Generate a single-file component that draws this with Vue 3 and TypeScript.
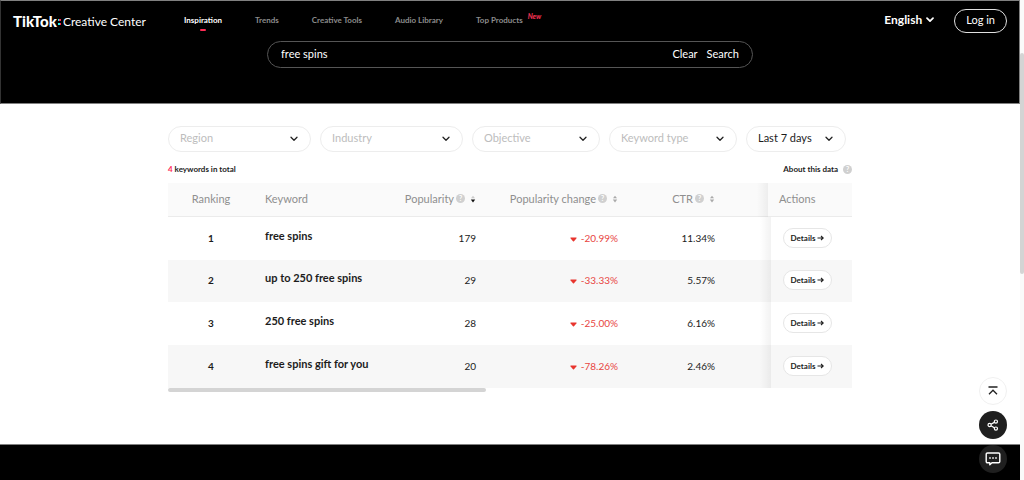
<script setup lang="ts">
import { ref } from 'vue'

interface NavItem { label: string; active?: boolean; badge?: string }
interface Filter { id: string; label: string; size: string; filled?: boolean }
interface Row { rank: number; keyword: string; popularity: number; change: string; ctr: string }

const nav: NavItem[] = [
  { label: 'Inspiration', active: true },
  { label: 'Trends' },
  { label: 'Creative Tools' },
  { label: 'Audio Library' },
  { label: 'Top Products', badge: 'New' },
]

const filters: Filter[] = [
  { id: 'region', label: 'Region', size: 'wide' },
  { id: 'industry', label: 'Industry', size: 'wide' },
  { id: 'objective', label: 'Objective', size: 'medium' },
  { id: 'keyword-type', label: 'Keyword type', size: 'medium' },
  { id: 'period', label: 'Last 7 days', size: 'narrow', filled: true },
]

const rows: Row[] = [
  { rank: 1, keyword: 'free spins', popularity: 179, change: '-20.99%', ctr: '11.34%' },
  { rank: 2, keyword: 'up to 250 free spins', popularity: 29, change: '-33.33%', ctr: '5.57%' },
  { rank: 3, keyword: '250 free spins', popularity: 28, change: '-25.00%', ctr: '6.16%' },
  { rank: 4, keyword: 'free spins gift for you', popularity: 20, change: '-78.26%', ctr: '2.46%' },
]

const metrics = [
  { label: 'Popularity', cls: 'popularity', sorted: true },
  { label: 'Popularity change', cls: 'change', sorted: false },
  { label: 'CTR', cls: 'ctr', sorted: false },
]

const query = ref('free spins')
</script>

<template>
  <div class="window">
    <div class="page">
      <div class="hero">
        <header class="topbar">
          <a class="logo" href="#" aria-label="TikTok Creative Center">
            <span class="brand">TikTok</span>
            <svg class="colon" width="3" height="8" viewBox="0 0 3 8" aria-hidden="true">
              <rect x="0" y="1" width="1" height="2" fill="#25f4ee" /><rect x="1" y="1" width="2" height="2" fill="#fe2c55" />
              <rect x="0" y="5" width="2" height="2" fill="#25f4ee" /><rect x="2" y="5" width="1" height="2" fill="#fe2c55" />
            </svg>
            <span class="product">Creative Center</span>
          </a>
          <nav class="nav">
            <a v-for="item in nav" :key="item.label" href="#" :class="{ active: item.active }">
              {{ item.label }}<sup v-if="item.badge">{{ item.badge }}</sup>
            </a>
          </nav>
          <button class="language" type="button">
            English
            <svg width="8" height="6" viewBox="0 0 8 6" aria-hidden="true"><path d="M1 1.2 4 4.2 7 1.2" fill="none" stroke="#fff" stroke-width="1.7" stroke-linecap="round" stroke-linejoin="round" /></svg>
          </button>
          <button class="login" type="button">Log in</button>
        </header>
        <form class="search" @submit.prevent>
          <input v-model="query" type="text" aria-label="Search keywords" />
          <button type="button" @click="query = ''">Clear</button>
          <button type="submit">Search</button>
        </form>
      </div>

      <main class="content">
        <div class="filters">
          <div v-for="f in filters" :key="f.id" class="filter" :class="[f.size, { filled: f.filled }]">
            <select :id="f.id" :aria-label="f.label"><option>{{ f.label }}</option></select>
            <svg width="8" height="6" viewBox="0 0 8 6" aria-hidden="true"><path d="M1 1.2 4 4.2 7 1.2" fill="none" stroke="#222" stroke-width="1.3" stroke-linecap="round" stroke-linejoin="round" /></svg>
          </div>
        </div>

        <div class="summary">
          <span><em>4</em> keywords in total</span>
          <a href="#" class="about">About this data <span class="help">?</span></a>
        </div>

        <table>
          <thead>
            <tr>
              <th class="rank">Ranking</th>
              <th class="keyword">Keyword</th>
              <th v-for="m in metrics" :key="m.cls" :class="m.cls">
                <span class="metric">
                  {{ m.label }}
                  <span class="help">?</span>
                  <svg class="sort" width="6" height="8" viewBox="0 0 6 8" aria-hidden="true">
                    <path d="M3 .8 5 3.2H1Z" :fill="m.sorted ? '#ccc' : '#aaa'" />
                    <path d="M3 7.4 5.2 4.6H.8Z" :fill="m.sorted ? '#111' : '#aaa'" />
                  </svg>
                </span>
              </th>
              <th class="actions">Actions</th>
            </tr>
          </thead>
          <tbody>
            <tr v-for="row in rows" :key="row.rank">
              <td class="rank">{{ row.rank }}</td>
              <td class="keyword">{{ row.keyword }}</td>
              <td class="popularity">{{ row.popularity }}</td>
              <td class="change">
                <svg width="7" height="5" viewBox="0 0 7 5" aria-hidden="true"><path d="M.8.5H6.2Q7 .7 6.4 1.4L4 4.2Q3.5 4.7 3 4.2L.6 1.4Q0 .7.8.5Z" fill="#e8352e" /></svg>
                {{ row.change }}
              </td>
              <td class="ctr">{{ row.ctr }}</td>
              <td class="actions">
                <button type="button">
                  Details
                  <svg width="7" height="6" viewBox="0 0 7 6" aria-hidden="true"><path d="M.5 3H6M4 1 6.2 3 4 5" fill="none" stroke="#222" stroke-width="1.1" /></svg>
                </button>
              </td>
            </tr>
          </tbody>
        </table>
        <div class="hscroll"><div class="thumb"></div></div>
      </main>

      <footer class="footer"></footer>
    </div>

    <div class="vscroll"><div class="thumb"></div></div>

    <div class="floaters">
      <button class="light" type="button" aria-label="Back to top">
        <svg width="12" height="12" viewBox="0 0 12 12" aria-hidden="true"><path d="M1.5 2H10.5M2 9.2 6 5.2 10 9.2" fill="none" stroke="#222" stroke-width="1.3" /></svg>
      </button>
      <button type="button" aria-label="Share">
        <svg width="12" height="12" viewBox="0 0 12 12" fill="none" stroke="#fff" stroke-width="1.2" aria-hidden="true"><path d="M4 5.2 7.3 3.4M4 6.8 7.3 8.8" /><circle cx="2.6" cy="6" r="1.6" /><circle cx="8.9" cy="2.6" r="1.6" /><circle cx="8.9" cy="9.6" r="1.6" /></svg>
      </button>
      <button type="button" aria-label="Feedback">
        <svg width="16" height="14" viewBox="0 0 16 14" aria-hidden="true"><path d="M2.5 1H13.5Q14.8 1 14.8 2.3V9.5Q14.8 10.8 13.5 10.8H7L4.8 12.8V10.8H2.5Q1.2 10.8 1.2 9.5V2.3Q1.2 1 2.5 1Z" fill="none" stroke="#fff" stroke-width="1.4" stroke-linejoin="round" /><path d="M4.2 5.2h1.6v1.6H4.2zM7.2 5.2h1.6v1.6H7.2zM10.2 5.2h1.6v1.6h-1.6z" fill="#fff" /></svg>
      </button>
    </div>
  </div>
</template>

<style>
body { margin: 0; background: #fff; }
</style>

<style scoped>
.window {
  display: flex;
  min-height: 100vh;
  font-family: Lato, "Liberation Sans", sans-serif;
  font-size: 11px;
  line-height: 14px;
  color: #1c1c1c;
}
.window * { box-sizing: border-box; }
a { color: inherit; text-decoration: none; }
button, input, select { font: inherit; color: inherit; background: none; border: 0; padding: 0; margin: 0; outline: 0; }
button { cursor: pointer; white-space: nowrap; }
.page { flex: 1; min-width: 0; display: flex; flex-direction: column; }

.hero {
  background: #000;
  color: #fff;
  border: 1px solid #808080;
  border-left-color: #333;
  padding-bottom: 35px;
}
.topbar { display: flex; align-items: center; height: 40px; padding: 0 12px; }
.logo { display: flex; align-items: center; width: 171px; }
.brand { font-size: 15px; font-weight: 900; }
.colon { margin: 2px 2px 0 1px; }
.product { font-size: 12px; padding-top: 2px; }
.nav { display: flex; flex: 1; gap: 33px; padding-bottom: 2px; font-size: 8px; font-weight: 700; color: #8c8c8c; white-space: nowrap; }
.nav a { position: relative; }
.nav .active { color: #fff; }
.nav .active::after {
  content: "";
  position: absolute;
  left: 50%;
  bottom: -4px;
  width: 6px;
  height: 2px;
  margin-left: -3px;
  border-radius: 1px;
  background: #fe2c55;
}
.nav sup { margin-left: 5px; font-size: 7px; line-height: 0; font-style: italic; font-weight: 900; color: #e8304f; }
.language { display: flex; align-items: center; gap: 4px; padding-bottom: 2px; font-size: 12px; font-weight: 700; margin-right: 20px; }
.login { height: 24px; padding: 0 11px 2px; border: 1px solid #e0e0e0; border-radius: 12px; }
.search {
  display: flex;
  align-items: center;
  gap: 9px;
  width: 486px;
  max-width: 90%;
  height: 27px;
  margin: 0 auto;
  padding: 0 13px 2px;
  border: 1px solid #555;
  border-radius: 14px;
}
.search input { flex: 1; min-width: 0; }

.content { flex: 1; width: 684px; max-width: 100%; margin: 0 auto; padding-top: 22px; }
.filters { display: flex; gap: 9px; }
.filter { position: relative; height: 26px; }
.filter.wide { width: 143px; }
.filter.medium { width: 128px; }
.filter.narrow { width: 100px; }
.filter select {
  width: 100%;
  height: 100%;
  padding: 0 24px 2px 11px;
  border: 1px solid #ededed;
  border-radius: 13px;
  color: #bdbdbd;
  appearance: none;
}
.filter.filled select { color: #1c1c1c; }
.filter svg { position: absolute; right: 13px; top: 10px; pointer-events: none; }

.summary { display: flex; justify-content: space-between; margin: 10px 0 7px; font-size: 8px; font-weight: 700; }
.summary em { font-style: normal; color: #fe2c55; }
.about { display: flex; align-items: center; gap: 5px; }
.help {
  display: inline-block;
  width: 9px;
  height: 9px;
  border-radius: 50%;
  background: #d0d0d0;
  color: #fff;
  font-size: 7px;
  font-weight: 700;
  line-height: 9px;
  text-align: center;
}

table { width: 100%; table-layout: fixed; border-collapse: separate; border-spacing: 0; }
th, td { padding: 0 10px 2px; text-align: right; font-weight: 400; }
th { height: 34px; background: #fafafa; color: #8f8f8f; border-bottom: 1px solid #ebebeb; }
td { height: 43px; font-size: 10px; }
tbody tr:nth-child(2) td { height: 42px; }
tbody tr:nth-child(even) td { background: #f7f7f7; }
.rank { width: 86px; text-align: center; }
.keyword { width: 136px; text-align: left; padding-left: 11px; }
th.keyword, td.keyword { padding-right: 0; white-space: nowrap; }
td.rank, td.keyword { font-weight: 700; }
td.keyword { padding-bottom: 6px; font-size: 11px; }
.popularity { width: 96px; }
.change { width: 142px; }
td.change { color: #e8453f; }
td.change svg { margin-right: 1px; }
.ctr { padding-right: 56px; }
.metric { display: inline-flex; align-items: center; gap: 2px; white-space: nowrap; }
.sort { margin-left: 3px; }
.actions { position: relative; width: 81px; text-align: left; }
th.actions { padding-left: 8px; }
td.actions { padding-left: 12px; }
.actions::before {
  content: "";
  position: absolute;
  top: 0;
  bottom: 0;
  left: -11px;
  width: 11px;
  background: linear-gradient(to right, rgba(0, 0, 0, 0), rgba(0, 0, 0, .05));
}
th.actions::before { left: -14px; bottom: -1px; }
.actions button {
  display: flex;
  align-items: center;
  justify-content: center;
  gap: 2px;
  width: 49px;
  height: 20px;
  border: 1px solid #e6e6e6;
  border-radius: 10px;
  background: #fff;
  font-size: 8px;
  font-weight: 700;
}
.hscroll .thumb { width: 318px; height: 4px; border-radius: 2px; background: #d4d4d4; }
.footer { height: 36px; background: #000; border-top: 1px solid #808080; }

.vscroll { flex: 0 0 4px; padding-top: 53px; background: #fafafa; }
.vscroll .thumb { height: 221px; border-radius: 2px; background: #d4d4d4; }

.floaters { position: fixed; right: 17px; bottom: 7px; display: grid; gap: 6px; }
.floaters button {
  display: grid;
  place-items: center;
  width: 28px;
  height: 28px;
  border-radius: 50%;
  background: #1f1f1f;
}
.floaters .light { background: #fff; border: 1px solid #f0f0f0; }
</style>
